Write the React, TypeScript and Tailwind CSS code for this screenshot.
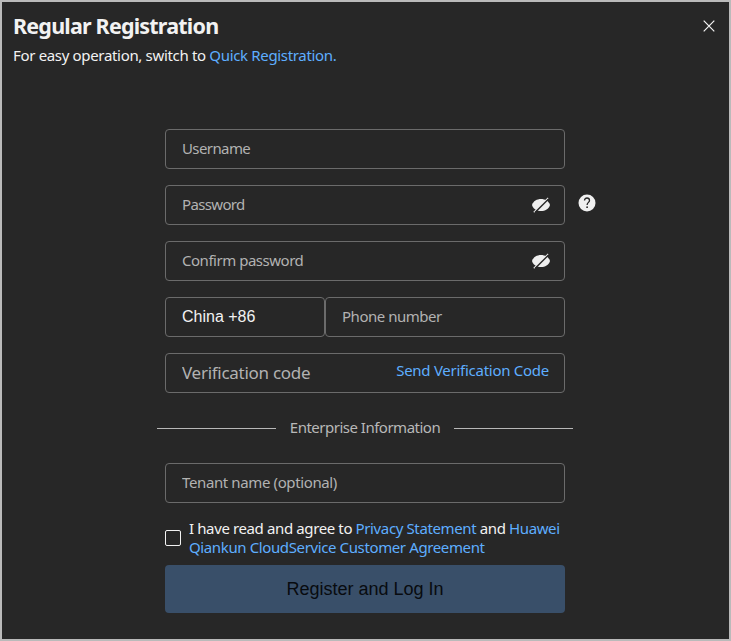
import { useState } from "react";
import type { ReactNode } from "react";

type FieldProps = {
    placeholder: string;
    type?: string;
    inputClass?: string;
    className?: string;
    children?: ReactNode;
};

function Field({ placeholder, type = "text", inputClass = "text-[15px] tracking-[-0.48px]", className = "w-[400px]", children }: FieldProps) {
    return (
    <div className={`flex h-10 items-center rounded-[4px] border border-[#6b6b6b] pr-[13px] pl-4 ${className}`}>
        <input
            type={type}
            placeholder={placeholder}
            className={`h-full min-w-0 flex-1 bg-transparent pb-0.5 outline-none placeholder:text-[#b2b2b2] ${inputClass}`}
        />
        {children}
    </div>
    );
}

function EyeOff() {
    return (
    <svg width="20" height="18" viewBox="0 0 20 18">
        <path d="M1 9C2.200 5 6 3 10 3s7.800 2 9 6c-1.200 4-5 6-9 6s-7.800-2-9-6z" fill="#efefef" />
        <path d="M2.800 16.200 17.200 2" stroke="#efefef" strokeWidth="1.200" />
        <path d="M4 16.400 17.800 2.800" stroke="#272727" strokeWidth="1.400" />
    </svg>
    );
}

function PasswordField({ placeholder, inputClass }: { placeholder: string; inputClass?: string }) {
    const [visible, setVisible] = useState(false);

    return (
    <Field placeholder={placeholder} type={visible ? "text" : "password"} inputClass={inputClass}>
        <button type="button" aria-label="Toggle visibility" onClick={() => setVisible(!visible)}>
            <EyeOff />
        </button>
    </Field>
    );
}

function Help() {
    return (
    <svg width="18" height="18" viewBox="0 0 18 18">
        <circle cx="9" cy="9" r="8.500" fill="#f0f0f0" />
        <path d="M6.500 6.600c0-1.600 1-2.600 2.500-2.600s2.500 1 2.500 2.400c0 1.900-2.400 2.100-2.400 4.600" fill="none" stroke="#272727" strokeWidth="1.300" />
        <circle cx="9.100" cy="13.200" r="0.900" fill="#272727" />
    </svg>
    );
}

export default function App() {
    return (
    <div className="h-[641px] w-[731px] overflow-hidden border-2 border-[#bababa] bg-[#272727] font-['Noto_Sans',sans-serif] text-[#f2f2f2]">
        <header className="flex h-[127px] justify-between pt-2 pr-[14px] pl-[11px]">
            <div>
                <h1 className="h-8 text-[21.5px] leading-8 font-bold tracking-[-0.8px] whitespace-nowrap">Regular Registration</h1>
                <p className="mt-0.5 text-[15px] leading-[22px] tracking-[-0.33px] whitespace-nowrap">
                    For easy operation, switch to <a href="#" className="text-[#5eaeff]">Quick Registration.</a>
                </p>
            </div>
            <button type="button" aria-label="Close" className="mt-2.5 h-3 w-3">
                <svg width="12" height="12" viewBox="0 0 12 12">
                    <path d="M.7.7l10.600 10.600M11.300.7.7 11.300" stroke="#f5f5f5" strokeWidth="1.200" />
                </svg>
            </button>
        </header>

        <form className="ml-[163px] flex w-[440px] flex-col" onSubmit={(e) => e.preventDefault()}>
            <div className="flex flex-col gap-4">
                <Field placeholder="Username" inputClass="text-[15px] tracking-[-0.6px]" />
                <div className="flex items-center gap-[13px]">
                    <PasswordField placeholder="Password" inputClass="text-[15px] tracking-[-0.65px]" />
                    <span className="pb-1"><Help /></span>
                </div>
                <PasswordField placeholder="Confirm password" />
                <div className="flex">
                    <button type="button" className="h-10 w-40 rounded-[4px] border border-[#6b6b6b] pl-4 text-left font-['Liberation_Sans',sans-serif] text-base">
                        China +86
                    </button>
                    <Field placeholder="Phone number" className="w-60" />
                </div>
                <Field placeholder="Verification code" inputClass="text-[17px] tracking-[-0.28px]">
                    <button type="button" className="mr-0.5 pb-1.5 text-[15px] tracking-[-0.27px] whitespace-nowrap text-[#5eaeff]">
                        Send Verification Code
                    </button>
                </Field>
            </div>

            <div className="-ml-2 flex h-[70px] w-[416px] items-center gap-[14px]">
                <hr className="flex-1 border-[#b8b8b8]" />
                <span className="pb-0.5 text-[15px] tracking-[-0.5px] whitespace-nowrap text-[#b8b8b8]">Enterprise Information</span>
                <hr className="flex-1 border-[#b8b8b8]" />
            </div>

            <Field placeholder="Tenant name (optional)" inputClass="text-[15px] tracking-[-0.38px]" />

            <div className="mt-4 flex h-[46px] items-start gap-2">
                <input type="checkbox" aria-label="Agree" className="mt-[11px] h-4 w-4 appearance-none rounded-[2px] border border-[#f2f2f2] checked:bg-[#5eaeff]" />
                <p className="text-[15px] leading-[19px] tracking-[-0.38px] whitespace-nowrap">
                    I have read and agree to <a href="#" className="text-[#5eaeff]">Privacy Statement</a> and <a href="#" className="text-[#5eaeff]">Huawei<br />Qiankun CloudService Customer Agreement</a>
                </p>
            </div>

            <button type="submit" className="h-12 w-[400px] rounded-[4px] bg-[#394f69] font-['Liberation_Sans',sans-serif] text-lg text-[#080b0f]">
                Register and Log In
            </button>
        </form>
    </div>
    );
}
